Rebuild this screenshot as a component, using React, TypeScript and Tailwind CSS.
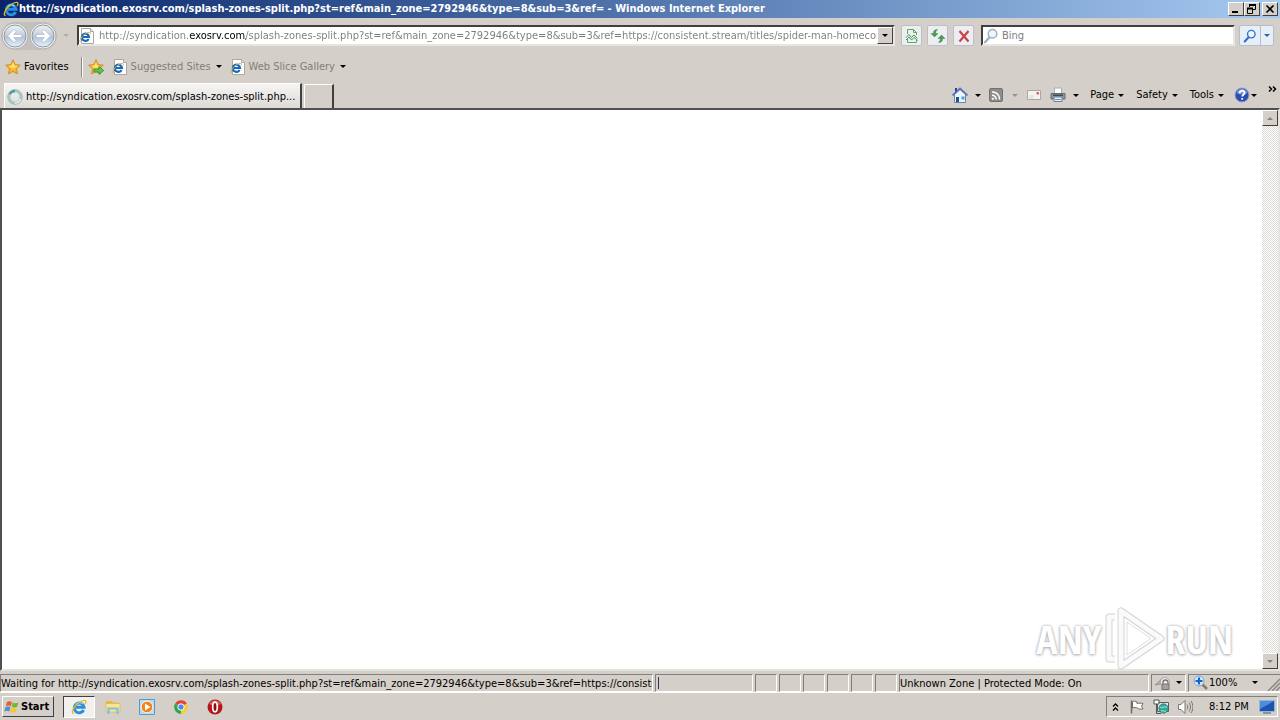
import type { ReactNode } from "react";
import clsx from "clsx";

const raised =
  "border border-t-white border-l-white border-r-[#404040] border-b-[#404040] bg-[#d4cfc8]";
const sunken = "border border-t-[#808080] border-l-[#808080] border-r-white border-b-white";

const pageUrl =
  "http://syndication.exosrv.com/splash-zones-split.php?st=ref&main_zone=2792946&type=8&sub=3&ref=https://consistent.stream/titles/spider-man-homecoming";

function Caret({ className }: { className?: string }) {
  return (
    <svg viewBox="0 0 6 3" className={clsx("h-[3px] w-1.5 shrink-0", className)} aria-hidden="true">
      <path d="M0 0h6L3 3z" fill="currentColor" />
    </svg>
  );
}

function IeLogo({ className }: { className?: string }) {
  return (
    <svg viewBox="0 0 16 16" className={clsx("shrink-0", className)} aria-hidden="true">
      <path
        d="M12.6 11A4.900 4.900 0 1 1 13 8.200H5"
        fill="none"
        stroke="#2a8fdc"
        strokeWidth="3"
      />
      <path d="M4.600 5.600A4.600 4.600 0 0 1 11.600 5" fill="none" stroke="#7fd4f8" strokeWidth="1.400" />
      <path
        d="M2.600 14.600C.3 14.400 1.200 9.800 5.200 5.800S14.500.2 15 2.200c.2.800-.2 1.800-.9 3"
        fill="none"
        stroke="#f1b61e"
        strokeWidth="1.300"
      />
    </svg>
  );
}

function PageIcon() {
  return (
    <svg viewBox="0 0 16 16" className="size-4 shrink-0" aria-hidden="true">
      <path d="M2.500.5h9l3 3v12h-12z" fill="#fff" stroke="#a9a9a4" />
      <path d="M11.500.5v3h3" fill="#e4e4e0" stroke="#a9a9a4" />
      <path d="M9.600 11A3.600 3.600 0 1 1 10 9H4" fill="none" stroke="#1769c0" strokeWidth="2.200" />
      <path d="M1.500 14.300C-.4 12.600 3.200 7.400 7.200 5.400s4.900-.6 4 .9" fill="none" stroke="#d9b23c" />
    </svg>
  );
}

function StarIcon({ arrow = false }: { arrow?: boolean }) {
  return (
    <svg viewBox="0 0 16 16" className="size-4 shrink-0" aria-hidden="true">
      <path
        d="m8 .8 2.200 4.800 5.100.6-3.800 3.500 1 5.200L8 12.400l-4.500 2.500 1-5.200L.7 6.200l5.100-.6z"
        fill="#fdb52c"
        stroke="#c98a1c"
        strokeWidth=".9"
      />
      <path d="m8 3 1.500 3.600 3.300.5L8 9.800 3.200 7.100l3.300-.5z" fill="#ffe070" />
      {arrow && (
        <path d="M6 10h5V7.400l4.700 4.100L11 15.400V13H6z" fill="#5cc848" stroke="#2a8a2a" strokeWidth=".8" />
      )}
    </svg>
  );
}

function NavArrow({ label, flip = false }: { label: string; flip?: boolean }) {
  return (
    <button type="button" aria-label={label} className="size-7 shrink-0">
      <svg viewBox="0 0 28 28" className={clsx("size-7", flip && "-scale-x-100")}>
        <defs>
          <linearGradient id={flip ? "ballF" : "ballB"} x1="0" y1="0" x2="0" y2="1">
            <stop offset="0" stopColor="#eef2f6" />
            <stop offset=".45" stopColor="#c6d0dc" />
            <stop offset=".55" stopColor="#b4c4d6" />
            <stop offset="1" stopColor="#e3f4fc" />
          </linearGradient>
        </defs>
        <circle cx="14" cy="14" r="13" fill="#f0f0f0" stroke="#b2b2b4" />
        <circle cx="14" cy="14" r="11" fill={flip ? "url(#ballF)" : "url(#ballB)"} stroke="#8c98aa" />
        <path d="M6.500 14 13 7.600l2.200 2.200-2.600 2.600h8.200v3.200h-8.200l2.600 2.600-2.200 2.200z" fill="#fff" stroke="#a5b0c0" strokeWidth=".6" />
      </svg>
    </button>
  );
}

function Magnifier({ color, className }: { color: string; className?: string }) {
  return (
    <svg viewBox="0 0 16 16" className={clsx("shrink-0", className)} aria-hidden="true">
      <path d="M6.600 9.200 2 14.200" stroke={color} strokeWidth="2.400" strokeLinecap="round" />
      <circle cx="9.500" cy="5.800" r="4.300" fill="#eef6fd" stroke={color} strokeWidth="1.500" />
    </svg>
  );
}

function TitleButton({ label, children }: { label: string; children: ReactNode }) {
  return (
    <button type="button" aria-label={label} className={clsx("h-3.5 w-4", raised)}>
      <svg viewBox="0 0 14 12" className="h-3 w-3.5" fill="none" stroke="#000">
        {children}
      </svg>
    </button>
  );
}

function TitleBar() {
  return (
    <header className="flex h-[18px] shrink-0 items-center bg-linear-to-r from-[#0a246a] to-[#a6caf0] pr-0.5 pl-[3px]">
      <IeLogo className="size-4" />
      <h1 className="min-w-0 flex-1 truncate text-[11px] leading-[18px] font-bold text-white">
        http://syndication.exosrv.com/splash-zones-split.php?st=ref&amp;main_zone=2792946&amp;type=8&amp;sub=3&amp;ref= - Windows Internet Explorer
      </h1>
      <TitleButton label="Minimize">
        <path d="M3 9h6" strokeWidth="2" />
      </TitleButton>
      <TitleButton label="Restore">
        <path d="M4.500 4V1.500h6v5H8" />
        <path d="M4 2h7" strokeWidth="2" />
        <path d="M2.500 5.500h5v5h-5z" />
        <path d="M2 5.500h6" strokeWidth="2" />
      </TitleButton>
      <span className="w-0.5" />
      <TitleButton label="Close">
        <path d="m3.500 2.500 7 7m0-7-7 7" strokeWidth="1.700" />
      </TitleButton>
    </header>
  );
}

function ToolButton({ label, children }: { label: string; children: ReactNode }) {
  return (
    <button
      type="button"
      aria-label={label}
      className="flex size-[21px] shrink-0 items-center justify-center rounded-xs border border-[#bcc0c6] bg-[#eceef1]"
    >
      {children}
    </button>
  );
}

function AddressBar() {
  return (
    <div className="flex h-[35px] shrink-0 items-center pr-1.5 pl-px">
      <div className="flex rounded-full bg-[#c4c0bc]">
        <NavArrow label="Back" />
        <NavArrow label="Forward" flip />
      </div>
      <button type="button" aria-label="Recent pages" className="flex w-[18px] justify-center text-[#b0aca8]">
        <Caret className="h-1 w-2" />
      </button>
      <div className="ml-0.5 flex h-[21px] min-w-0 flex-1 items-center border-2 border-t-[#404040] border-r-[#e8e6e2] border-b-[#e8e6e2] border-l-[#404040] bg-white">
        <PageIcon />
        <input
          type="text"
          aria-label="Address"
          defaultValue={pageUrl}
          className="ml-1 h-4 min-w-0 flex-1 bg-[linear-gradient(90deg,#7c7c7c_90px,#000_90px,#000_147px,#7c7c7c_147px)] bg-clip-text text-transparent outline-none"
        />
        <button
          type="button"
          aria-label="Show address history"
          className={clsx("flex h-[17px] w-4 items-center justify-center", raised)}
        >
          <Caret className="h-1 w-2" />
        </button>
      </div>
      <div className="ml-1.5 flex gap-[5px]">
        <ToolButton label="Compatibility view">
          <svg viewBox="0 0 16 16" className="size-4" fill="none">
            <path d="M3.500 6V1.500h6l3 3V7M3.500 11v3.500h9V12" stroke="#5fa866" />
            <path d="M9.500 1.500v3h3" stroke="#5fa866" />
            <path d="m2 9.500 3-3 2.500 3L10 7l3.500 3.500M2 12l3-3 2.500 3L10 9.500l3.500 3" stroke="#3f9a4b" />
          </svg>
        </ToolButton>
        <ToolButton label="Refresh">
          <svg viewBox="0 0 16 16" className="size-4" fill="#4a9c55" stroke="#2b7a38" strokeWidth=".4">
            <path d="M7.500 1.500C4.500 1.500 3.400 3 3.400 5.500H1L4.500 9 8 5.500H5.600C5.600 3.800 6.200 2.700 7.500 1.500z" />
            <path d="M8.500 14.500c3 0 4.100-1.500 4.100-4H15L11.500 7 8 10.500h2.400c0 1.700-.6 2.800-1.900 4z" />
          </svg>
        </ToolButton>
        <ToolButton label="Stop">
          <svg viewBox="0 0 16 16" className="size-4" stroke="#c8444c" strokeWidth="2.200">
            <path d="m3.500 3 9 10.500M12.500 3l-9 10.500" />
          </svg>
        </ToolButton>
      </div>
      <div className="ml-[7px] flex h-[21px] w-[254px] shrink-0 items-center border-2 border-t-[#404040] border-r-[#e8e6e2] border-b-[#e8e6e2] border-l-[#404040] bg-white">
        <Magnifier color="#9fb0c2" className="size-4" />
        <input
          type="search"
          aria-label="Search"
          placeholder="Bing"
          className="ml-[3px] h-4 min-w-0 flex-1 outline-none placeholder:text-[#7c7c7c]"
        />
      </div>
      <div className="ml-1 flex h-[21px] shrink-0 rounded-xs border border-[#b3bfd0] bg-[#e8eef6]">
        <button type="button" aria-label="Run search" className="flex w-5 items-center justify-center">
          <Magnifier color="#2f6fd0" className="size-3.5" />
        </button>
        <button
          type="button"
          aria-label="Search options"
          className="flex w-[13px] items-center justify-center border-l border-[#b3bfd0] text-[#2464b4]"
        >
          <Caret />
        </button>
      </div>
    </div>
  );
}

function FavoritesBar() {
  return (
    <nav className="flex h-[27px] shrink-0 items-center pl-[5px]">
      <button type="button" className="flex items-center gap-[3px]">
        <StarIcon />
        Favorites
      </button>
      <span className="ml-3 h-5 w-0.5 border-l border-[#8c8883] bg-white" />
      <button type="button" aria-label="Add to Favorites Bar" className="ml-[5px]">
        <StarIcon arrow />
      </button>
      {["Suggested Sites", "Web Slice Gallery"].map((name) => (
        <button key={name} type="button" className="ml-2 flex items-center gap-[3px]">
          <PageIcon />
          <span className="text-[#827e7a]">{name}</span>
          <Caret className="ml-0.5" />
        </button>
      ))}
    </nav>
  );
}

function Command({ name, showName = false, icon, muted = false, className }: {
  name: string;
  showName?: boolean;
  icon?: ReactNode;
  muted?: boolean;
  className?: string;
}) {
  return (
    <button type="button" aria-label={name} className={clsx("flex items-center", className)}>
      {icon}
      {showName && name}
      <Caret className={muted ? "text-[#98948f]" : undefined} />
    </button>
  );
}

function CommandBar() {
  return (
    <div className="flex h-5 shrink-0 items-center">
      <Command
        name="Home"
        className="gap-[7px]"
        icon={
          <svg viewBox="0 0 16 16" className="size-4">
            <path d="M3 1h2v5H3z" fill="#2a3f95" />
            <path d="M2.500 7.500 8 2.500l5.500 5v8h-11z" fill="#edf4fc" stroke="#6884b0" />
            <path d="M.5 8.500 8 1.500l7.500 7" fill="none" stroke="#5670b4" strokeWidth="1.700" />
            <path d="M4 10h3v5H4z" fill="#23508f" />
            <path d="M9.500 9.500h3v3h-3z" fill="#4f9fd8" />
          </svg>
        }
      />
      <Command
        name="Feeds"
        muted
        className="ml-[7px] gap-2"
        icon={
          <svg viewBox="0 0 16 16" className="size-4" fill="none" stroke="#fff" strokeWidth="1.600">
            <rect x="1.500" y="1.500" width="13" height="13" rx="1.500" fill="#8e8c8a" stroke="#73716f" strokeWidth="1" />
            <path d="M4 5a7 7 0 0 1 7.500 7.500M4 8.300A4 4 0 0 1 8.200 12.500" />
            <circle cx="4.900" cy="11.700" r=".7" fill="#fff" stroke="#fff" strokeWidth="1" />
          </svg>
        }
      />
      <button type="button" aria-label="Read mail" className="ml-2">
        <svg viewBox="0 0 16 16" className="size-4">
          <path d="M1.500 3.500h13v9h-13z" fill="#f5f3f1" stroke="#aaa6a2" />
          <path d="M10.500 5h2.500v2.500h-2.500z" fill="#d8646a" />
          <path d="M3 9h5M3 11h4" stroke="#d9d6d2" />
        </svg>
      </button>
      <Command
        name="Print"
        className="ml-2 gap-[7px]"
        icon={
          <svg viewBox="0 0 16 16" className="size-4">
            <path d="M4.500 1h7v6h-7z" fill="#fff" stroke="#a4aeb8" />
            <path d="M1 6.500h14v5.500H1z" fill="#8d969f" stroke="#626b75" />
            <path d="M3 7.500h10v1.500H3z" fill="#404850" />
            <path d="M4 10h8v4.500H4z" fill="#e9f2fa" stroke="#76808c" />
            <path d="M5 12.500h6" stroke="#4b9ad8" />
          </svg>
        }
      />
      <Command name="Page" showName className="ml-[11px] gap-1" />
      <Command name="Safety" showName className="ml-3 gap-1" />
      <Command name="Tools" showName className="ml-3 gap-1" />
      <Command
        name="Help"
        className="ml-2.5 gap-px"
        icon={
          <svg viewBox="0 0 16 16" className="size-4">
            <circle cx="8" cy="8" r="7" fill="#2b4eae" stroke="#8fa0c8" />
            <path d="M2.500 6a5.800 5.800 0 0 1 11 0C10 8 6 8 2.500 6z" fill="#7294da" />
            <path d="M5.600 6.200C5.600 3 10.500 3 10.500 6c0 1.700-2.300 1.800-2.300 3.600" fill="none" stroke="#fff" strokeWidth="1.800" />
            <path d="M7.300 11h1.800v1.700H7.300z" fill="#fff" />
          </svg>
        }
      />
      <button type="button" aria-label="More commands" className="mb-3 ml-[11px] w-[9px]">
        <svg viewBox="0 0 9 6" className="h-1.5 w-[9px]" fill="none" stroke="#000" strokeWidth="1.500">
          <path d="m1 .5 2.500 2.500L1 5.500M5 .5 7.500 3 5 5.500" />
        </svg>
      </button>
    </div>
  );
}

function TabRow() {
  return (
    <div className="flex h-7 shrink-0 items-end justify-between pr-[3px] pl-1">
      <div className="flex items-end gap-0.5">
        <button
          type="button"
          className="flex h-[25px] w-[298px] items-center gap-[3px] border-t border-r-2 border-l border-t-white border-r-[#404040] border-l-white bg-linear-to-b from-[#f6f5f3] to-[#dedad5] pt-px pl-0.5"
        >
          <svg viewBox="0 0 16 16" className="size-4 shrink-0" fill="none" aria-hidden="true">
            <circle cx="8" cy="8" r="6" stroke="#a7ccc8" strokeWidth="3" />
            <path d="M2.600 5A6 6 0 0 1 8 2" stroke="#4a9da0" strokeWidth="2.500" />
            <path d="M8 14a6 6 0 0 0 5.800-4" stroke="#e1f3f0" strokeWidth="2" />
            <circle cx="8" cy="8" r="7.300" stroke="#819fae" strokeWidth=".5" />
          </svg>
          <span className="truncate">http://syndication.exosrv.com/splash-zones-split.php...</span>
        </button>
        <button
          type="button"
          aria-label="New tab"
          className="h-6 w-[30px] border-t border-r-2 border-l border-t-white border-r-[#404040] border-l-white"
        />
      </div>
      <div className="mb-[3px]">
        <CommandBar />
      </div>
    </div>
  );
}

function ScrollButton({ label, up = false }: { label: string; up?: boolean }) {
  return (
    <button
      type="button"
      aria-label={label}
      className={clsx("flex size-4 items-center justify-center text-[#85817c]", raised)}
    >
      <Caret className={clsx("h-1 w-2", up && "rotate-180")} />
    </button>
  );
}

function Watermark() {
  return (
    <div className="absolute right-[45px] -bottom-0.5 flex h-16 items-center font-['Open_Sans_Condensed','Roboto_Condensed','Noto_Sans_Condensed',Roboto,sans-serif] text-[40px] leading-none text-white [text-shadow:0_0_3px_#aaa,0_1px_3px_#bbb]">
      <span>ANY</span>
      <svg viewBox="0 0 64 64" className="size-16" fill="none" aria-hidden="true">
        <g strokeLinejoin="round">
          <path d="M20 4v55l40-27.500z" stroke="#d4d4d4" strokeWidth="7" />
          <path d="M14 10H8v42h6" stroke="#d4d4d4" strokeWidth="7" />
          <path d="M20 4v55l40-27.500z" stroke="#fafafa" strokeWidth="5" />
          <path d="M14 10H8v42h6" stroke="#fafafa" strokeWidth="5" />
          <path d="M26 15v33l24-16.500z" stroke="#dedede" />
        </g>
      </svg>
      <span>RUN</span>
    </div>
  );
}

function Viewport() {
  return (
    <main className="relative flex min-h-0 flex-1 justify-end border-2 border-t-[#505050] border-r-[#e6e3df] border-b-[#e6e3df] border-l-[#505050] bg-white">
      <div className="flex w-4 flex-col justify-between bg-[repeating-conic-gradient(#fff_0_25%,#dedad6_0_50%)] bg-[length:2px_2px]">
        <ScrollButton label="Scroll up" up />
        <ScrollButton label="Scroll down" />
      </div>
      <Watermark />
    </main>
  );
}

function StatusBar() {
  return (
    <footer className="flex h-[22px] shrink-0 items-center gap-0.5 border-b border-white pt-0.5">
      <div className={clsx("h-[18px] min-w-0 flex-1 overflow-hidden leading-[17px] whitespace-nowrap", sunken)}>
        Waiting for http://syndication.exosrv.com/splash-zones-split.php?st=ref&amp;main_zone=2792946&amp;type=8&amp;sub=3&amp;ref=https://consistent
      </div>
      <div className={clsx("flex h-[18px] w-[98px] items-center pl-0.5", sunken)}>
        <span className="h-3 w-px bg-[#2a3560]" />
      </div>
      {[0, 1, 2, 3, 4, 5].map((n) => (
        <span key={n} className={clsx("h-[18px] w-[22px]", sunken)} />
      ))}
      <div className={clsx("h-[18px] w-[250px] leading-[17px]", sunken)}>Unknown Zone | Protected Mode: On</div>
      <button
        type="button"
        aria-label="Privacy report"
        className={clsx("flex h-[18px] w-[35px] items-center justify-end gap-1 pr-[3px]", sunken)}
      >
        <svg viewBox="0 0 18 16" className="h-4 w-[18px]">
          <path d="M1 10 9 3l2 5z" fill="#b4b2b0" stroke="#989694" />
          <circle cx="11" cy="7" r="4.500" fill="#eeeeec" stroke="#aaa8a6" />
          <path d="M9 9V7.500a2.500 2.500 0 0 1 5 0V9" fill="none" stroke="#777574" strokeWidth="1.300" />
          <path d="M8 9h7v5.500H8z" fill="#a4a2a0" stroke="#777574" />
        </svg>
        <Caret />
      </button>
      <button type="button" className={clsx("flex h-[18px] w-[92px] items-center border-r-0 pl-1", sunken)}>
        <svg viewBox="0 0 16 16" className="size-4">
          <path d="m9 9 5 5" stroke="#8a7a66" strokeWidth="2.500" />
          <circle cx="6" cy="6" r="5" fill="#d8eafa" stroke="#81a4cc" />
          <path d="M6 2.500v7M2.500 6h7" stroke="#1763c8" strokeWidth="2.200" />
        </svg>
        100%
        <Caret className="ml-auto" />
        <svg viewBox="0 0 14 14" className="ml-2 size-3.5 self-end" stroke="#8a8680" strokeWidth="1.500">
          <path d="M2 14 14 2M6 14l8-8M10 14l4-4" />
        </svg>
      </button>
    </footer>
  );
}

function Taskbar() {
  return (
    <footer className="flex h-[27px] shrink-0 items-center px-0.5">
      <button
        type="button"
        className={clsx("flex h-[21px] w-[52px] items-center gap-px pl-px text-[11px] font-bold", raised)}
      >
        <svg viewBox="0 0 16 16" className="size-4 shrink-0" aria-hidden="true">
          <path d="M3 3c1.800-1.300 3.500-1 5 0L6.800 7.300c-1.500-1-3.200-1-5 0z" fill="#e7602c" />
          <path d="M8.800 3.400c1.800 1 3.600 1 5.700 0l-1.300 4.300c-1.900 1-3.700 1-5.500 0z" fill="#76b72c" />
          <path d="M1.500 8.300c1.800-1.200 3.500-1 5 0l-1.300 4.200c-1.500-1-3.200-1-5 0z" fill="#4b8fd8" />
          <path d="M7.400 8.700c1.800 1 3.600 1 5.500 0L11.600 13c-1.900 1-3.700 1-5.500 0z" fill="#f8c52c" />
        </svg>
        Start
      </button>
      <button
        type="button"
        aria-label="Internet Explorer"
        className="ml-[9px] flex h-[22px] w-8 items-center justify-center border border-t-[#404040] border-r-white border-b-white border-l-[#404040] bg-[#f2f0ee]"
      >
        <IeLogo className="size-4" />
      </button>
      <div className="ml-2.5 flex gap-[18px]">
        <button type="button" aria-label="Windows Explorer">
          <svg viewBox="0 0 16 16" className="size-4">
            <path d="M1 2h6l1 1.500h5V8H1z" fill="#e8b93c" />
            <path d="M1 4.500h14V13H1z" fill="#fbe58f" stroke="#d9b553" strokeWidth=".7" />
            <path d="M3.500 15V9.500h9V15" fill="none" stroke="#7fc0e6" strokeWidth="2.200" />
          </svg>
        </button>
        <button type="button" aria-label="Windows Media Player">
          <svg viewBox="0 0 16 16" className="size-4">
            <path d="M.5.500h15v15H.5z" fill="#b8dcf4" stroke="#559ccc" />
            <circle cx="8" cy="8" r="5.800" fill="#f48418" stroke="#fff" strokeWidth=".8" />
            <path d="M6 4.500 11.500 8 6 11.500z" fill="#fff" />
          </svg>
        </button>
        <button type="button" aria-label="Google Chrome">
          <svg viewBox="0 0 16 16" className="size-4">
            <path d="M8 8 2.100 4.600A6.800 6.800 0 0 1 13.900 4.600z" fill="#e04434" />
            <path d="M8 8 2.100 4.600A6.800 6.800 0 0 0 8 14.800z" fill="#35a452" />
            <path d="M8 8h-.1L8 14.800A6.800 6.800 0 0 0 13.900 4.600z" fill="#f9cc32" />
            <circle cx="8" cy="8" r="3.200" fill="#4b88e8" stroke="#fff" />
          </svg>
        </button>
        <button type="button" aria-label="Opera">
          <svg viewBox="0 0 16 16" className="size-4">
            <circle cx="8" cy="8" r="7.500" fill="#b5161c" />
            <path d="M2 5a7 7 0 0 1 12 0C10 7 6 7 2 5z" fill="#dc5c58" />
            <ellipse cx="8" cy="8" rx="2.300" ry="4.800" fill="#8c1014" stroke="#fff" strokeWidth="1.700" />
          </svg>
        </button>
      </div>
      <div className={clsx("ml-auto flex h-[21px] w-[172px] items-center pl-[5px]", sunken)}>
        <button type="button" aria-label="Show hidden icons">
          <svg viewBox="0 0 7 8" className="h-2 w-[7px]" fill="none" stroke="#000" strokeWidth="1.300">
            <path d="m1 3.500 2.500-2.500L6 3.500M1 7.500 3.500 5 6 7.500" />
          </svg>
        </button>
        <svg viewBox="0 0 16 16" className="ml-2.5 size-4" fill="#fff" stroke="#6e6c6a">
          <path d="M2.500 1.500v13" strokeWidth="1.500" />
          <path d="M3.500 2.500c2-1 3 0 4.500.5v1.500c2-.5 4-.5 6 0l-1.500 2.500 1.500 3c-2.500.5-4 0-5.500-1-1.500-.5-3-1-5 0z" />
        </svg>
        <svg viewBox="0 0 16 16" className="ml-2 size-4" fill="none">
          <path d="M4.500 3.500h11v9h-11z" fill="#e6eeec" stroke="#55605e" />
          <path d="M1 1h5v4H1z" fill="#fff" stroke="#555" />
          <path d="M3.500 5v9.500H8" stroke="#555" />
          <circle cx="10.500" cy="9.500" r="4.700" fill="#35a797" stroke="#26796e" strokeWidth=".7" />
          <path d="M7 8c2 2 5-2 7 1M8 12c2-1 3 1 5 0" stroke="#a9ece0" />
        </svg>
        <svg viewBox="0 0 16 16" className="ml-2 size-4" fill="none" stroke="#777572">
          <path d="M1.500 5.500H4l4-4v13l-4-4H1.500z" fill="#fff" />
          <path d="M10 5.500c1 1.500 1 3.500 0 5M12 3.500c2 3 2 6 0 9M14 2c2.500 4 2.500 8 0 12" />
        </svg>
        <time className="ml-4">8:12 PM</time>
        <button type="button" aria-label="Show desktop" className="mr-0.5 ml-auto">
          <svg viewBox="0 0 16 14" className="h-3.5 w-4">
            <path d="M.5.500h15v11H.5z" fill="#1c55ad" stroke="#98b3d4" />
            <path d="M1 1h14L1 9z" fill="#4d8ddd" />
            <path d="M4 13h8" stroke="#717c8a" strokeWidth="1.500" />
          </svg>
        </button>
      </div>
    </footer>
  );
}

export default function App() {
  return (
    <div className="flex h-screen flex-col overflow-hidden bg-[#d4cfc8] font-['DejaVu_Sans_Condensed','DejaVu_Sans',sans-serif] text-[11px] leading-4 text-black">
      <TitleBar />
      <AddressBar />
      <FavoritesBar />
      <TabRow />
      <Viewport />
      <StatusBar />
      <Taskbar />
    </div>
  );
}
